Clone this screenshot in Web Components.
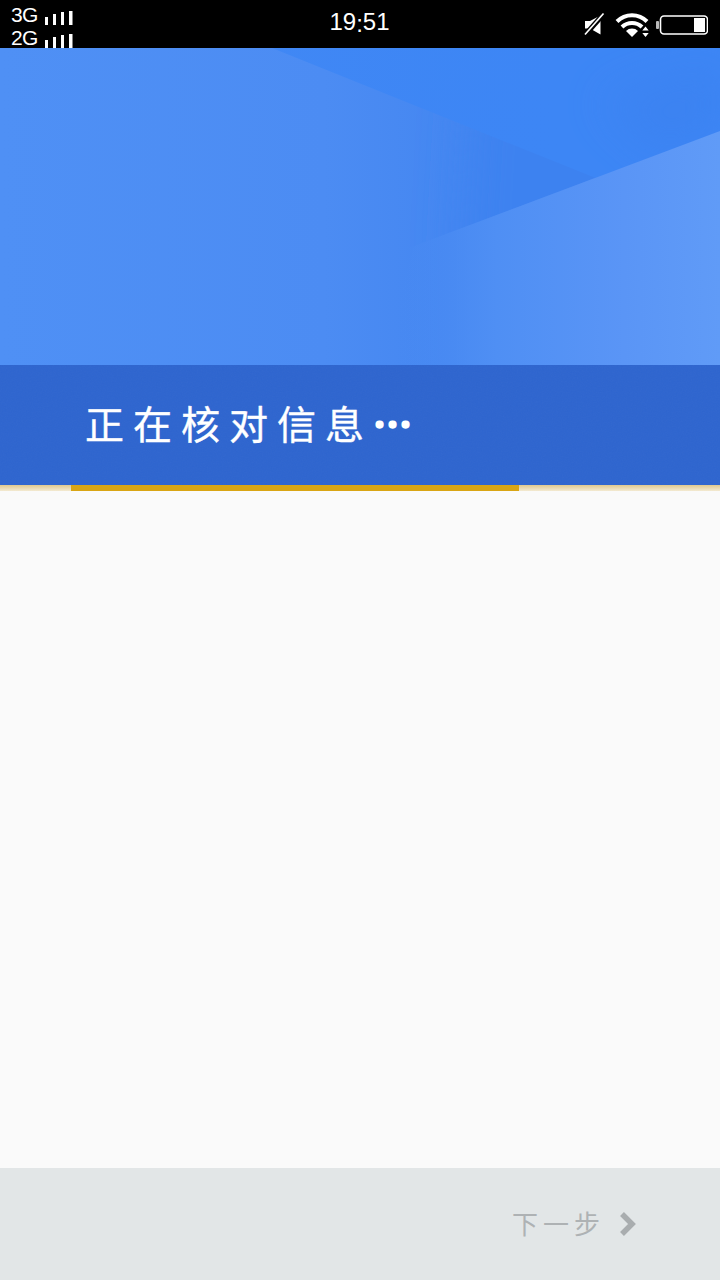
<!DOCTYPE html>
<html lang="zh">
<head>
<meta charset="utf-8">
<title>正在核对信息</title>
<style>
  html, body { margin: 0; padding: 0; }
  body { width: 720px; height: 1280px; overflow: hidden; font-family: "Liberation Sans", sans-serif; }
  setup-screen { height: 1280px; }
</style>
</head>
<body>
<setup-screen>
  <status-bar slot="status"></status-bar>
  <hero-banner slot="hero" progress="448" offset="71">正在核对信息<span>…</span></hero-banner>
  <footer-bar slot="footer">下一步</footer-bar>
</setup-screen>

<script>
class SetupScreen extends HTMLElement {
  constructor() {
    super();
    this.attachShadow({ mode: 'open' });
    this.shadowRoot.innerHTML = `
      <style>
        :host { display: flex; flex-direction: column; width: 720px; background: #fafafa; }
        main { flex: 1; background: #fafafa; }
      </style>
      <slot name="status"></slot>
      <slot name="hero"></slot>
      <main></main>
      <slot name="footer"></slot>
    `;
  }
}

class StatusBar extends HTMLElement {
  constructor() {
    super();
    this.attachShadow({ mode: 'open' });
    const bars = `
      <svg width="28" height="14" viewBox="0 0 28 14" fill="#fff">
        <rect x="0" y="6" width="3" height="8"/>
        <rect x="8" y="3" width="3" height="11"/>
        <rect x="16" y="1" width="3" height="13"/>
        <rect x="24" y="0" width="3.5" height="14"/>
      </svg>`;
    this.shadowRoot.innerHTML = `
      <style>
        :host {
          display: flex; align-items: center; justify-content: space-between;
          height: 48px; background: #000; color: #fff; padding: 0 12px 0 11px;
          box-sizing: border-box;
          font-family: "Liberation Sans", sans-serif;
        }
        .net { display: flex; flex-direction: column; gap: 3px; width: 200px; padding-top: 4px; }
        .row { display: flex; align-items: flex-end; gap: 7px; height: 20px; font-size: 21px; line-height: 20px; letter-spacing: -0.6px; }
        .time { font-size: 24px; margin-top: -3px; }
        .time b { font-weight: 400; vertical-align: -2px; }
        .icons { display: flex; align-items: center; justify-content: flex-end; width: 200px; }
        svg { display: block; }
      </style>
      <div class="net">
        <div class="row"><span>3G</span>${bars}</div>
        <div class="row"><span>2G</span>${bars}</div>
      </div>
      <div class="time">19<b>:</b>51</div>
      <div class="icons">
        <svg width="128" height="28" viewBox="580 9 128 28">
          <path d="M585 20h5l10.500-5.500v19l-10.500-6h-5z" fill="#fff"/>
          <path d="M585.500 33.500L604 12.500" stroke="#000" stroke-width="5"/>
          <path d="M585 33.500L603.500 12.500" stroke="#fff" stroke-width="1.7"/>
          <g fill="none" stroke="#fff" stroke-width="4">
            <path d="M617 20.500a21 21 0 0 1 30 0"/>
            <path d="M622 26a14.500 14.500 0 0 1 20 0"/>
          </g>
          <path d="M626 30a8.500 8.500 0 0 1 12 0L632 36z" fill="#fff"/>
          <path d="M645.500 25.500l3.200 4h-6.400zM645.500 36l3.200-4h-6.400z" fill="#fff"/>
          <rect x="656" y="20" width="3" height="8" rx="1" fill="#bbb"/>
          <rect x="660.500" y="15" width="47" height="18" rx="3.500" fill="none" stroke="#fff" stroke-width="1.600"/>
          <rect x="694" y="17" width="11" height="14" fill="#fff"/>
        </svg>
      </div>
    `;
  }
}

class HeroBanner extends HTMLElement {
  constructor() {
    super();
    this.attachShadow({ mode: 'open' });
    const left = this.getAttribute('offset');
    const width = this.getAttribute('progress');
    this.shadowRoot.innerHTML = `
      <style>
        :host { display: block; }
        svg { display: block; }
        .band {
          height: 120px; background: #2e65cf; display: flex; align-items: center;
          padding: 0 0 5px 85px; box-sizing: border-box; color: #fff; position: relative;
          font-family: "Noto Sans CJK SC", sans-serif; font-size: 39px; font-weight: 400;
          letter-spacing: 9px; line-height: 1; -webkit-text-stroke: .4px #fff;
        }
        .grain { position: absolute; left: 0; top: 0; opacity: .03; }
        .text { position: relative; }
        ::slotted(span) { -webkit-text-stroke: 3px #fff; }
        .track { height: 6px; background: linear-gradient(#dfc88f, #f3ead2); }
        .bar { height: 6px; width: ${width}px; margin-left: ${left}px; background: #d9a514; }
      </style>
      <svg width="720" height="317" viewBox="0 48 720 317">
        <defs>
          <linearGradient id="base" x1="0" x2="720" y1="0" y2="0" gradientUnits="userSpaceOnUse">
            <stop offset="0" stop-color="#4f90f5"/>
            <stop offset=".45" stop-color="#4c8cf3"/>
            <stop offset=".62" stop-color="#4587f1"/>
            <stop offset="1" stop-color="#4c8cf3"/>
          </linearGradient>
          <linearGradient id="wedge" x1="272" y1="0" x2="560" y2="0" gradientUnits="userSpaceOnUse">
            <stop offset="0" stop-color="#3d86f5" stop-opacity=".8"/>
            <stop offset="1" stop-color="#3d86f5"/>
          </linearGradient>
          <linearGradient id="light" x1="400" y1="0" x2="720" y2="0" gradientUnits="userSpaceOnUse">
            <stop offset="0" stop-color="#4a8bf3" stop-opacity="0"/>
            <stop offset=".3" stop-color="#4f8ff4"/>
            <stop offset=".7" stop-color="#5a95f6"/>
            <stop offset="1" stop-color="#609bf7"/>
          </linearGradient>
          <filter id="soft" x="-80%" y="-80%" width="260%" height="260%">
            <feGaussianBlur stdDeviation="22"/>
          </filter>
          <clipPath id="above"><polygon points="272,48 720,48 720,131 300,289"/></clipPath>
        </defs>
        <rect x="0" y="48" width="720" height="317" fill="url(#base)"/>
        <g clip-path="url(#above)">
          <polygon points="470,90 760,90 760,260 460,270" fill="#3c82f0" filter="url(#soft)"/>
        </g>
        <polygon points="272,48 720,48 720,228" fill="url(#wedge)"/>
        <polygon points="720,60 720,131 660,154 600,100" fill="#3a7eec" opacity=".4" filter="url(#soft)"/>
        <polygon points="720,131 414,246 380,365 720,365" fill="url(#light)"/>
      </svg>
      <div class="band">
        <svg class="grain" width="720" height="120">
          <filter id="noise"><feTurbulence type="fractalNoise" baseFrequency=".8" numOctaves="2"/><feColorMatrix type="saturate" values="0"/></filter>
          <rect width="720" height="120" filter="url(#noise)"/>
        </svg>
        <div class="text"><slot></slot></div>
      </div>
      <div class="track"><div class="bar"></div></div>
    `;
  }
}

class FooterBar extends HTMLElement {
  constructor() {
    super();
    this.attachShadow({ mode: 'open' });
    this.shadowRoot.innerHTML = `
      <style>
        :host {
          display: flex; align-items: center; justify-content: flex-end;
          height: 112px; background: #e2e6e7; color: #aeb2b4; padding-right: 80px;
          box-sizing: border-box; font-family: "Noto Sans CJK SC", sans-serif;
          font-size: 26px; gap: 11px;
        }
        .label { letter-spacing: 5px; line-height: 1; margin-top: -2px; }
        svg { display: block; }
      </style>
      <div class="label"><slot></slot></div>
      <svg width="24" height="26" viewBox="0 0 24 26">
        <path d="M6 3l10 10-10 10" fill="none" stroke="#a9adaf" stroke-width="5.5"/>
      </svg>
    `;
  }
}

customElements.define('setup-screen', SetupScreen);
customElements.define('status-bar', StatusBar);
customElements.define('hero-banner', HeroBanner);
customElements.define('footer-bar', FooterBar);
</script>
</body>
</html>
